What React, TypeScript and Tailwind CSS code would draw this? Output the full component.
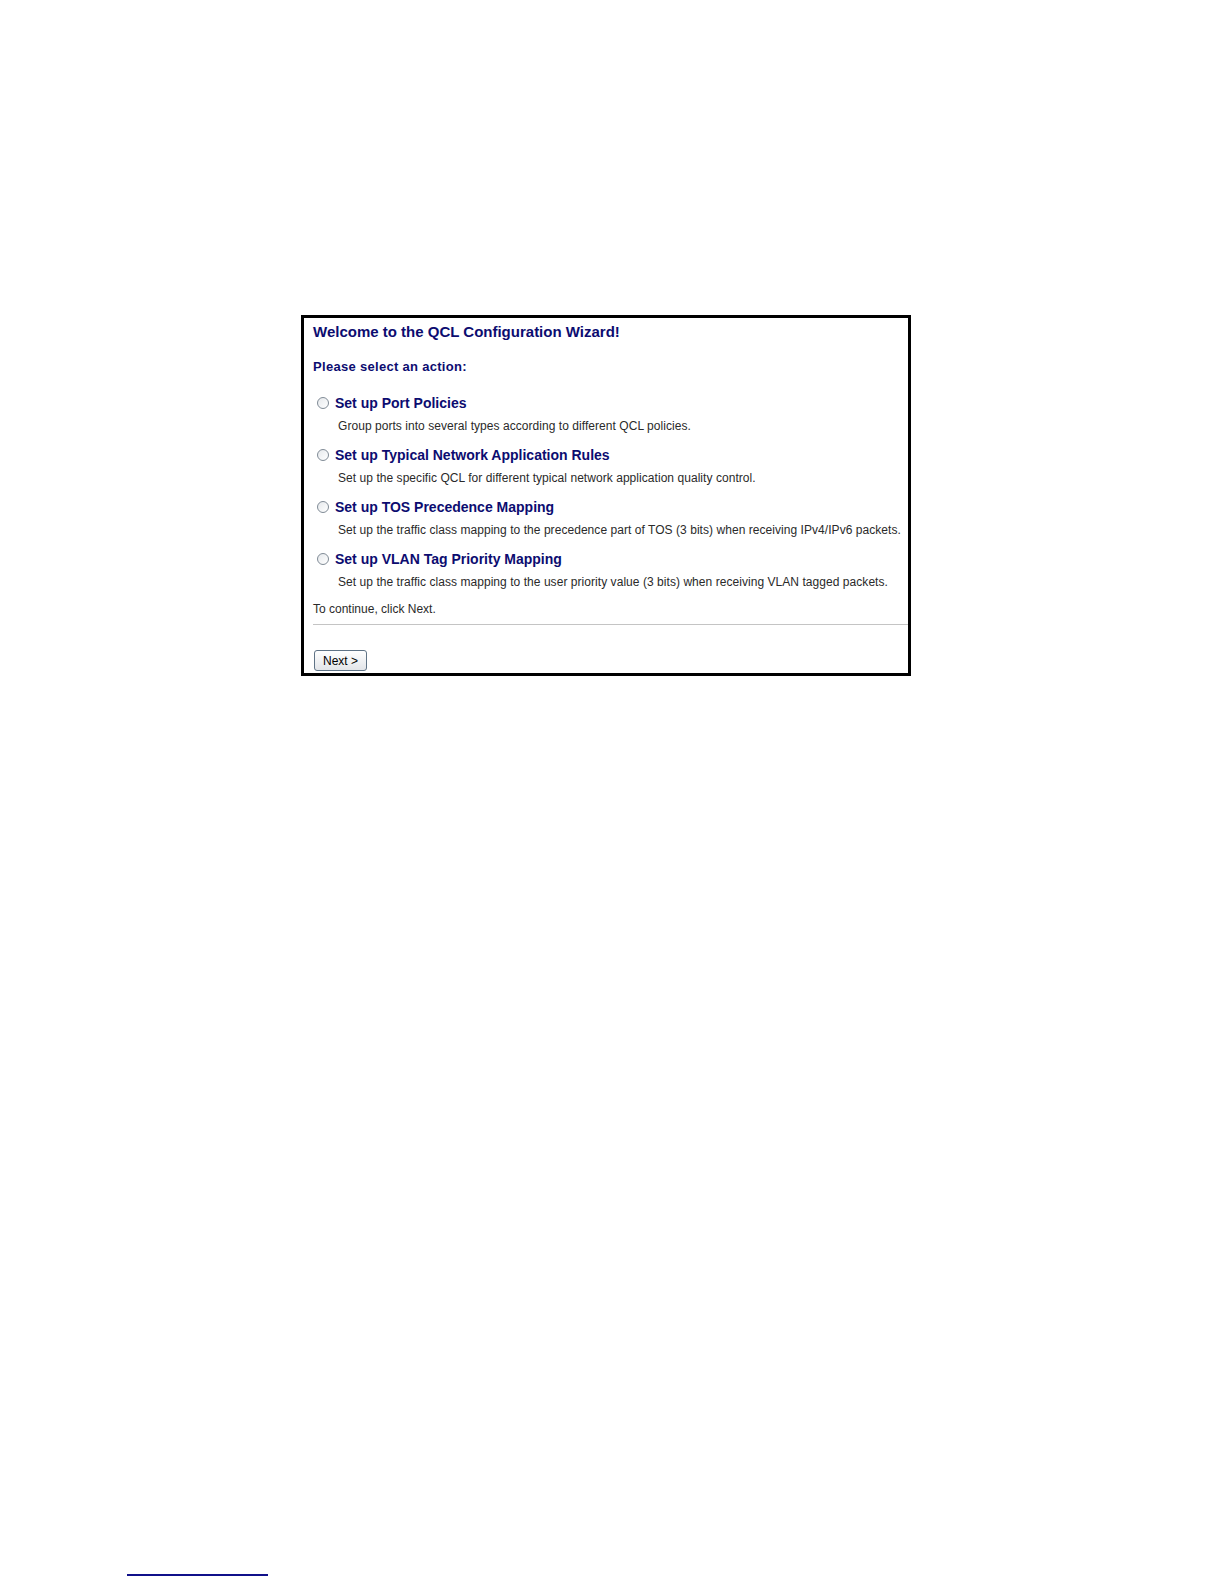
const OPTIONS = [
  {
    label: 'Set up Port Policies',
    desc: 'Group ports into several types according to different QCL policies.',
  },
  {
    label: 'Set up Typical Network Application Rules',
    desc: 'Set up the specific QCL for different typical network application quality control.',
  },
  {
    label: 'Set up TOS Precedence Mapping',
    desc: 'Set up the traffic class mapping to the precedence part of TOS (3 bits) when receiving IPv4/IPv6 packets.',
  },
  {
    label: 'Set up VLAN Tag Priority Mapping',
    desc: 'Set up the traffic class mapping to the user priority value (3 bits) when receiving VLAN tagged packets.',
  },
]

function Radio() {
  return (
    <span className="ml-[4px] inline-block h-[12px] w-[12px] shrink-0 rounded-full border border-[#808b96] bg-gradient-to-br from-[#e6e9ec] to-white" />
  )
}

export default function App() {
  return (
    <div
      className="flex h-screen w-full flex-col overflow-hidden bg-white"
      style={{ fontFamily: '"Liberation Sans", Arial, sans-serif' }}
    >
      <div className="ml-[301px] mt-[315px] h-[361px] w-[610px] shrink-0 border-[3px] border-black">
        <div className="pl-[9px] pt-[5px]">
          <div className="h-[18px] text-[15px] font-bold leading-[18px] text-[#0c0c70]">
            Welcome to the QCL Configuration Wizard!
          </div>
          <div className="mt-[17px] h-[18px] text-[13px] font-bold leading-[18px] tracking-[0.3px] text-[#0c0c70]">
            Please select an action:
          </div>
          <div className="mt-[17px] flex flex-col gap-[11px]">
            {OPTIONS.map((o) => (
              <div key={o.label}>
                <div className="flex h-[20px] items-center gap-[6px]">
                  <Radio />
                  <span className="text-[14px] font-bold leading-[20px] text-[#0c0c70]">
                    {o.label}
                  </span>
                </div>
                <div className="mt-[5px] h-[16px] pl-[25px] text-[12px] leading-[16px] tracking-[0.05px] text-[#2a2a2a]">
                  {o.desc}
                </div>
              </div>
            ))}
            <div className="h-[16px] text-[12px] leading-[16px] text-[#2a2a2a]">
              To continue, click Next.
            </div>
          </div>
          <div className="mt-[7px] h-px bg-[#c4c4c4]" />
          <button className="ml-px mt-[25px] flex h-[21px] w-[53px] items-center justify-center rounded-[3px] border border-[#5f7386] bg-gradient-to-b from-white to-[#e2e5e9] text-[12px] leading-none text-black">
            Next &gt;
          </button>
        </div>
      </div>
      <div className="mb-[8px] ml-[127px] mt-auto h-[2px] w-[141px] shrink-0 bg-[#10108a]" />
    </div>
  )
}
